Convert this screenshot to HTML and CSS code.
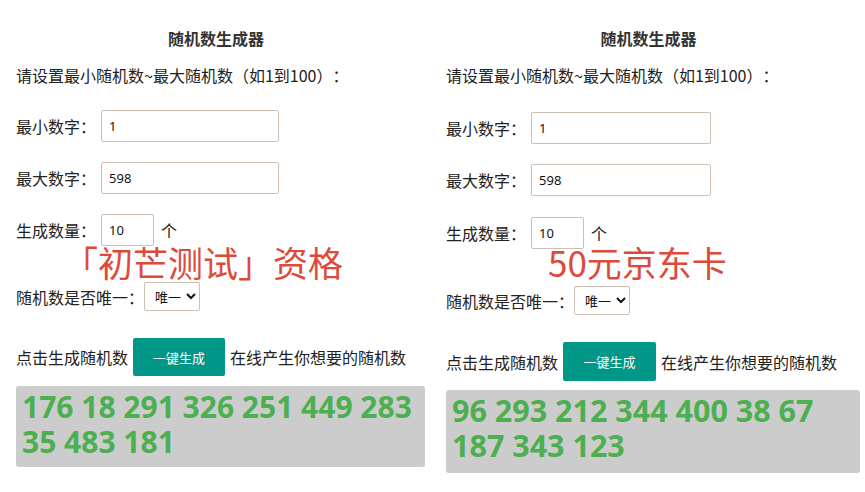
FILE: index.html
```html
<!DOCTYPE html>
<html>
<head>
  <meta charset="utf-8">
  <title>随机数生成器</title>
  <link rel="stylesheet" href="styles.css">
</head>
<body>
  <div class="page">
    <section class="panel panel-a">
      <h2 class="title">随机数生成器</h2>
      <p class="hint">请设置最小随机数~最大随机数（如1到100）：</p>
      <div class="row row-min">
        <label class="label">最小数字：</label>
        <input class="field" type="text" value="1">
      </div>
      <div class="row row-max">
        <label class="label">最大数字：</label>
        <input class="field" type="text" value="598">
      </div>
      <div class="row row-count">
        <label class="label">生成数量：</label>
        <input class="field field-sm" type="text" value="10">
        <span class="unit">个</span>
      </div>
      <div class="stamp">「初芒测试」资格</div>
      <div class="row row-unique">
        <label class="label label-tight">随机数是否唯一：</label>
        <select class="choice">
          <option>唯一</option>
          <option>可重复</option>
        </select>
      </div>
      <div class="row row-action">
        <span>点击生成随机数</span>
        <button class="btn">一键生成</button>
        <span>在线产生你想要的随机数</span>
      </div>
      <div class="result">176 18 291 326 251 449 283 35 483 181</div>
    </section>

    <section class="panel panel-b">
      <h2 class="title">随机数生成器</h2>
      <p class="hint">请设置最小随机数~最大随机数（如1到100）：</p>
      <div class="row row-min">
        <label class="label">最小数字：</label>
        <input class="field" type="text" value="1">
      </div>
      <div class="row row-max">
        <label class="label">最大数字：</label>
        <input class="field" type="text" value="598">
      </div>
      <div class="row row-count">
        <label class="label">生成数量：</label>
        <input class="field field-sm" type="text" value="10">
        <span class="unit">个</span>
      </div>
      <div class="stamp">50元京东卡</div>
      <div class="row row-unique">
        <label class="label label-tight">随机数是否唯一：</label>
        <select class="choice">
          <option>唯一</option>
          <option>可重复</option>
        </select>
      </div>
      <div class="row row-action">
        <span>点击生成随机数</span>
        <button class="btn">一键生成</button>
        <span>在线产生你想要的随机数</span>
      </div>
      <div class="result">96 293 212 344 400 38 67 187 343 123</div>
    </section>
  </div>
</body>
</html>
```

FILE: styles.css
```css
body {
  margin: 0;
  background-color: #ffffff;
  color: #222222;
  font-family: "Noto Sans CJK SC", "Noto Sans", sans-serif;
  font-size: 16px;
  text-spacing-trim: space-all;
}

.page {
  display: grid;
  grid-template-columns: 432px 433px;
  height: 492px;
}

.panel {
  position: relative;
  padding: 26px 7px 0 16px;
}

.panel-b {
  padding-left: 14px;
  padding-right: 5px;
}

.title {
  margin: 0 -7px 0 -16px;
  font-size: 16px;
  line-height: 24px;
  font-weight: bold;
  text-align: center;
  color: #333333;
}

.panel-b .title {
  margin: 0 -5px 0 -14px;
}

.hint {
  margin: 13px 0 0;
  line-height: 24px;
}

.row {
  display: flex;
  align-items: center;
  height: 32px;
  margin-top: 20px;
}

.row-min {
  margin-top: 23px;
}

.row-unique {
  height: 29px;
  margin-top: 36px;
}

.row-action {
  height: 38px;
  margin-top: 27px;
}

.panel-b .row-min {
  margin-top: 25px;
}

.panel-b .row-count {
  margin-top: 21px;
}

.panel-b .row-unique {
  margin-top: 37px;
}

.panel-b .row-action {
  height: 39px;
}

.label {
  margin-right: 5px;
}

.label-tight {
  margin-right: 0;
}

.field {
  box-sizing: border-box;
  width: 178px;
  height: 32px;
  padding: 0 7px;
  border: 1px solid #cdbfb3;
  border-radius: 2px;
  font-family: "Noto Sans", sans-serif;
  font-size: 13px;
  color: #111111;
  background-color: #ffffff;
}

.panel-b .field {
  width: 180px;
}

.field-sm,
.panel-b .field-sm {
  width: 53px;
}

.unit {
  margin-left: 7px;
}

.choice {
  box-sizing: border-box;
  width: 56px;
  height: 29px;
  padding: 0 2px 0 6px;
  border: 1px solid #cdbfb3;
  border-radius: 2px;
  font-family: "Noto Sans CJK SC", sans-serif;
  font-size: 13px;
  color: #111111;
  background-color: #ffffff;
}

.btn {
  box-sizing: border-box;
  width: 92px;
  height: 38px;
  margin: 0 5px;
  border: none;
  border-radius: 2px;
  background-color: #009688;
  color: #ffffff;
  font-family: "Noto Sans CJK SC", sans-serif;
  font-size: 13px;
}

.panel-b .btn {
  width: 93px;
  height: 39px;
}

.stamp {
  position: absolute;
  top: 244px;
  left: 63px;
  font-size: 35px;
  line-height: 35px;
  color: #dc4a3a;
  white-space: nowrap;
}

.panel-b .stamp {
  left: 116px;
}

.result {
  box-sizing: border-box;
  height: 81px;
  margin-top: 10px;
  padding: 3px 6px 0;
  border-radius: 3px;
  background-color: #cccccc;
  color: #4caf50;
  font-family: "Open Sans", sans-serif;
  font-weight: bold;
  font-size: 30px;
  line-height: 35px;
}

.panel-b .result {
  height: 83px;
  margin-top: 9px;
  font-size: 30.5px;
}
```
